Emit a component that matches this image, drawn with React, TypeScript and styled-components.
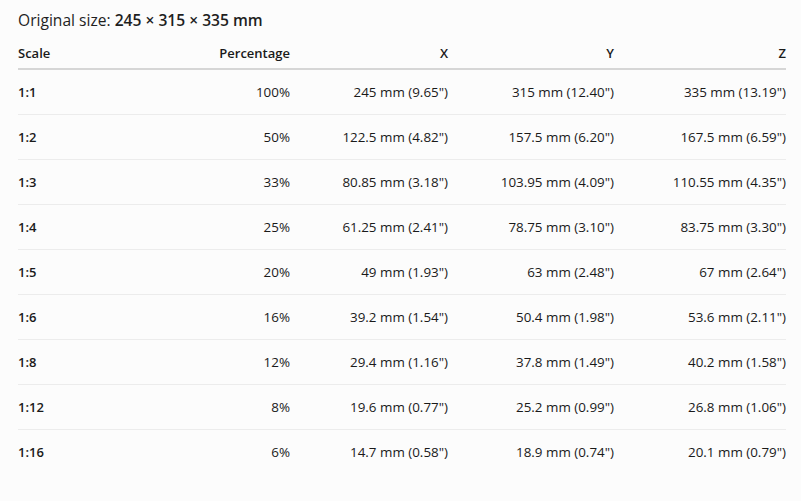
import styled, { createGlobalStyle } from 'styled-components';

const GlobalStyle = createGlobalStyle`
  html, body {
    margin: 0;
    padding: 0;
    background: #fcfcfc;
  }
  body {
    font-family: 'Open Sans', 'Noto Sans', sans-serif;
    color: #1a1a1a;
  }
`;

const Page = styled.div`
  padding: 9px 15px 0 18px;
`;

const Title = styled.div`
  font-size: 15.6px;
  line-height: 22px;
  color: #1f1f1f;
  margin-bottom: 6px;
`;

const Strong = styled.span`
  font-weight: 600;
`;

const Table = styled.table`
  width: 768px;
  border-collapse: collapse;
  table-layout: fixed;
  font-size: 13.4px;
`;

const HeadCell = styled.th<{ $align?: string; $width: number }>`
  width: ${(p) => p.$width}px;
  text-align: ${(p) => p.$align || 'right'};
  font-weight: 600;
  font-size: 13px;
  height: 31px;
  padding: 0;
  border-bottom: 2px solid #d6d6d6;
  vertical-align: middle;
`;

const Row = styled.tr`
  & + & > td {
    border-top: 1px solid #ececec;
  }
`;

const Cell = styled.td<{ $bold?: boolean }>`
  text-align: ${(p) => (p.$bold ? 'left' : 'right')};
  font-weight: ${(p) => (p.$bold ? 600 : 400)};
  font-size: ${(p) => (p.$bold ? '13px' : '13.4px')};
  height: 44px;
  padding: 0;
  vertical-align: middle;
`;

const rows = [
  ['1:1', '100%', '245 mm (9.65")', '315 mm (12.40")', '335 mm (13.19")'],
  ['1:2', '50%', '122.5 mm (4.82")', '157.5 mm (6.20")', '167.5 mm (6.59")'],
  ['1:3', '33%', '80.85 mm (3.18")', '103.95 mm (4.09")', '110.55 mm (4.35")'],
  ['1:4', '25%', '61.25 mm (2.41")', '78.75 mm (3.10")', '83.75 mm (3.30")'],
  ['1:5', '20%', '49 mm (1.93")', '63 mm (2.48")', '67 mm (2.64")'],
  ['1:6', '16%', '39.2 mm (1.54")', '50.4 mm (1.98")', '53.6 mm (2.11")'],
  ['1:8', '12%', '29.4 mm (1.16")', '37.8 mm (1.49")', '40.2 mm (1.58")'],
  ['1:12', '8%', '19.6 mm (0.77")', '25.2 mm (0.99")', '26.8 mm (1.06")'],
  ['1:16', '6%', '14.7 mm (0.58")', '18.9 mm (0.74")', '20.1 mm (0.79")'],
];

export default function App() {
  return (
    <Page>
      <GlobalStyle />
      <Title>
        Original size: <Strong>245 × 315 × 335 mm</Strong>
      </Title>
      <Table>
        <thead>
          <tr>
            <HeadCell $align="left" $width={136}>Scale</HeadCell>
            <HeadCell $width={136}>Percentage</HeadCell>
            <HeadCell $width={158}>X</HeadCell>
            <HeadCell $width={166}>Y</HeadCell>
            <HeadCell $width={172}>Z</HeadCell>
          </tr>
        </thead>
        <tbody>
          {rows.map((r) => (
            <Row key={r[0]}>
              {r.map((v, i) => (
                <Cell key={i} $bold={i === 0}>
                  {v}
                </Cell>
              ))}
            </Row>
          ))}
        </tbody>
      </Table>
    </Page>
  );
}
